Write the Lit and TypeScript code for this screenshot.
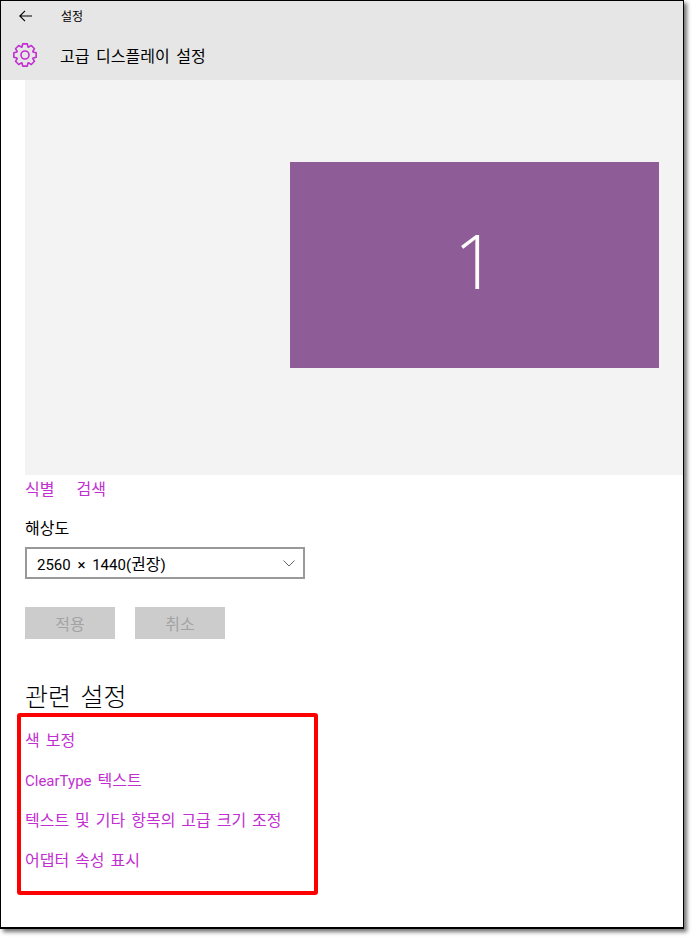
import {LitElement, html, css} from 'lit';
import {customElement} from 'lit/decorators.js';

const links = [
  html`색 보정`,
  html`<span class="latin">ClearType</span> 텍스트`,
  html`텍스트 및 기타 항목의 고급 크기 조정`,
  html`어댑터 속성 표시`,
];

// eight rounded teeth round a 24 box
const gearPath = () => {
  const pts: string[] = [];
  for (let i = 0; i < 8; i++) {
    const a = (i * Math.PI) / 4 - Math.PI / 2;
    const step = 0.2;
    const at = (r: number, t: number) =>
      `${(12 + r * Math.cos(a + t)).toFixed(2)} ${(12 + r * Math.sin(a + t)).toFixed(2)}`;
    pts.push(at(8.6, -0.36), at(11.4, -step), at(11.4, step), at(8.6, 0.36));
  }
  return `M${pts.join('L')}Z`;
};

@customElement('app-root')
export class AppRoot extends LitElement {
  static override styles = css`
    :host {
      display: block;
      width: 692px;
      height: 937px;
      background: #fff;
      font-family: 'Open Sans', 'Noto Sans CJK KR', sans-serif;
      color: #000;
      overflow: hidden;
    }
    .window {
      box-sizing: border-box;
      position: relative;
      width: 684px;
      height: 929px;
      border: solid #000;
      border-width: 1px 1px 2px 1px;
      background: #fff;
      box-shadow: 3px 3px 4px rgba(0, 0, 0, 0.55);
    }
    .header {
      height: 79px;
      background: #e6e6e6;
      display: flex;
      flex-direction: column;
    }
    .nav {
      height: 29px;
      display: flex;
      align-items: center;
      padding-left: 18px;
      gap: 29px;
      font-size: 12px;
    }
    .back {
      width: 13px;
      height: 12px;
      display: block;
    }
    .title {
      height: 50px;
      display: flex;
      align-items: center;
      padding-left: 12px;
      gap: 23px;
      font-size: 16px;
      word-spacing: 2.5px;
    }
    .gear {
      width: 24px;
      height: 24px;
      display: block;
    }
    .content {
      padding-left: 24px;
    }
    .preview {
      height: 395px;
      background: #f3f3f3;
      padding: 82px 24px 0 265px;
      box-sizing: border-box;
    }
    .monitor {
      height: 206px;
      box-sizing: border-box;
      padding: 0 0 10px 2px;
      background: #8e5c96;
      color: #fff;
      display: flex;
      align-items: center;
      justify-content: center;
      font-size: 76px;
      font-weight: 300;
      line-height: 1;
    }
    .actions {
      display: flex;
      gap: 22px;
      height: 26px;
      align-items: center;
      font-size: 16px;
    }
    a {
      color: #c12ed1;
      text-decoration: none;
    }
    .label {
      margin-top: 15px;
      height: 24px;
      line-height: 24px;
      font-size: 16px;
    }
    .select {
      box-sizing: border-box;
      margin-top: 7px;
      width: 280px;
      height: 32px;
      border: 2px solid #999;
      display: flex;
      align-items: center;
      justify-content: space-between;
      padding: 0 8px 0 10px;
      font-size: 16px;
    }
    .latin {
      font-family: Roboto, sans-serif;
      font-size: 15px;
    }
    .select .latin {
      word-spacing: 3px;
    }
    .chevron {
      width: 12px;
      height: 7px;
      display: block;
    }
    .buttons {
      display: flex;
      gap: 20px;
      margin-top: 28px;
    }
    .button {
      width: 90px;
      height: 32px;
      background: #ccc;
      color: #a3a3a3;
      font-size: 16px;
      display: flex;
      align-items: center;
      justify-content: center;
    }
    h2 {
      margin: 39px 0 0;
      font-size: 25px;
      font-weight: 300;
      line-height: 36px;
      word-spacing: 3px;
    }
    .links {
      display: flex;
      flex-direction: column;
      gap: 16px;
      margin-top: 14px;
      font-size: 16px;
      word-spacing: 1.8px;
    }
    .links a {
      height: 24px;
      line-height: 24px;
    }
    .highlight {
      position: absolute;
      left: 16px;
      top: 712px;
      width: 301px;
      height: 182px;
      box-sizing: border-box;
      border: 4px solid #f00;
      border-radius: 3px;
    }
  `;

  override render() {
    return html`<div class="window">
      <div class="header">
        <div class="nav">
          <svg class="back" viewBox="0 0 13 12" fill="none" stroke="#000" stroke-width="1.1">
            <path d="M13 6H1M6 .8 .8 6 6 11.2" />
          </svg>
          <span>설정</span>
        </div>
        <div class="title">
          <svg class="gear" viewBox="0 0 24 24" fill="none" stroke="#c12ed1" stroke-width="1.6" stroke-linejoin="round">
            <path d=${gearPath()} />
            <circle cx="12" cy="12" r="4" />
          </svg>
          <span>고급 디스플레이 설정</span>
        </div>
      </div>
      <div class="content">
        <div class="preview"><div class="monitor">1</div></div>
        <div class="actions"><a>식별</a><a>검색</a></div>
        <div class="label">해상도</div>
        <div class="select">
          <span><span class="latin">2560 × 1440(</span>권장<span class="latin">)</span></span>
          <svg class="chevron" viewBox="0 0 12 7" fill="none" stroke="#666" stroke-width="1">
            <path d="M.5.5 6 6 11.5.5" />
          </svg>
        </div>
        <div class="buttons">
          <div class="button">적용</div>
          <div class="button">취소</div>
        </div>
        <h2>관련 설정</h2>
        <div class="links">${links.map((l) => html`<a>${l}</a>`)}</div>
      </div>
      <div class="highlight"></div>
    </div>`;
  }
}

declare global {
  interface HTMLElementTagNameMap {
    'app-root': AppRoot;
  }
}
